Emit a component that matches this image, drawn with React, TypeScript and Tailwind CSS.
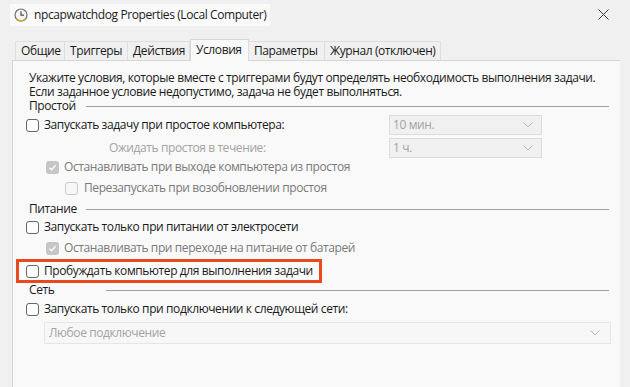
import React from "react";

const font = { fontFamily: '"Open Sans", "Noto Sans", sans-serif' };

function Check({ checked = false, disabled = false }: { checked?: boolean; disabled?: boolean }) {
  if (disabled && checked) {
    return (
      <div className="w-[13px] h-[13px] rounded-[3px] bg-[#c6c6c6] flex items-center justify-center shrink-0">
        <svg width="9" height="9" viewBox="0 0 9 9">
          <path d="M1.5 4.7 L3.6 6.7 L7.6 2.2" stroke="#ffffff" strokeWidth="1.3" fill="none" />
        </svg>
      </div>
    );
  }
  if (disabled) {
    return <div className="w-[13px] h-[13px] rounded-[3px] border border-[#c8c8c8] bg-[#f7f7f7] shrink-0" />;
  }
  return <div className="w-[13px] h-[13px] rounded-[3px] border border-[#666666] bg-[#fdfdfd] shrink-0" />;
}

function Chevron() {
  return (
    <svg width="10" height="6" viewBox="0 0 10 6">
      <path d="M0.5 0.5 L5 5 L9.5 0.5" stroke="#b4b4b4" strokeWidth="1" fill="none" />
    </svg>
  );
}

function Combo({ text, w, h = 20 }: { text: string; w: string; h?: number }) {
  return (
    <div
      className={`${w} border border-[#dcdcdc] bg-[#f0f0f0] flex items-center justify-between pl-[3px] pr-[8px] text-[#a3a3a3]`}
      style={{ height: h }}
    >
      <span className="whitespace-nowrap">{text}</span>
      <Chevron />
    </div>
  );
}

function GroupHeader({ label, lineStart }: { label: string; lineStart: string }) {
  return (
    <div className="flex items-center relative h-full">
      <span className="pl-[16px] whitespace-nowrap">{label}</span>
      <div className={`absolute ${lineStart} right-[11px] top-1/2 h-px bg-[#a0a0a0]`} />
    </div>
  );
}

export default function App() {
  const tabs = [
    { t: "Общие", w: "w-[50px]" },
    { t: "Триггеры", w: "w-[64px]" },
    { t: "Действия", w: "w-[63px]" },
    { t: "Условия", w: "w-[59px]", sel: true },
    { t: "Параметры", w: "w-[77px]" },
    { t: "Журнал (отключен)", w: "w-[117px]" },
  ];
  return (
    <div
      className="w-[630px] h-[387px] bg-[#f0f0f0] text-[12px] tracking-[-0.4px] text-[#1a1a1a] overflow-hidden flex flex-col whitespace-nowrap"
      style={font}
    >
      {/* title bar */}
      <div className="h-[30px] flex items-center relative shrink-0">
        <div className="ml-[10px] h-[22px] bg-[#fafafa] flex items-center pr-[4px]">
          <svg width="14" height="14" viewBox="0 0 14 14" className="ml-[4px]">
            <circle cx="7" cy="7" r="6" fill="#f4f4f4" stroke="#6e6e6e" strokeWidth="1.2" />
            <path d="M7 3.3 V7.2 H10" stroke="#4a4a4a" strokeWidth="1.2" fill="none" />
            <path d="M2.2 10.5 A6 6 0 0 0 11.8 10.5" stroke="#d9a520" strokeWidth="1.2" fill="none" />
          </svg>
          <span className="ml-[6px] text-[12px] text-[#1a1a1a]">npcapwatchdog Properties (Local Computer)</span>
        </div>
        <svg width="11" height="11" viewBox="0 0 11 11" className="absolute left-[598px] top-[9px]">
          <path d="M0.5 0.5 L10.5 10.5 M10.5 0.5 L0.5 10.5" stroke="#3a3a3a" strokeWidth="1" />
        </svg>
      </div>
      {/* tabs */}
      <div className="h-[30px] flex items-end pl-[15px] shrink-0 relative z-10">
        {tabs.map((tb) =>
          tb.sel ? (
            <div
              key={tb.t}
              className={`${tb.w} h-[22px] bg-[#f9f9f9] border border-b-0 border-[#d6d6d6] pl-[5px] pb-[2px] flex items-center -mb-px`}
            >
              {tb.t}
            </div>
          ) : (
            <div
              key={tb.t}
              className={`${tb.w} h-[19px] bg-[#f0f0f0] border-l border-t border-r border-[#dedede] -ml-px first:ml-0 pl-[5px] flex items-center`}
            >
              {tb.t}
            </div>
          )
        )}
      </div>
      {/* panel */}
      <div className="ml-[12px] w-[608px] flex-1 bg-[#f9f9f9] border-l border-t border-[#d6d6d6] flex flex-col pt-[10px]">
        <div className="h-[14px] flex items-center pl-[16px] leading-[14px]">
          Укажите условия, которые вместе с триггерами будут определять необходимость выполнения задачи.
        </div>
        <div className="h-[14px] flex items-center pl-[16px] leading-[14px]">
          Если заданное условие недопустимо, задача не будет выполняться.
        </div>
        <div className="h-[14px]">
          <GroupHeader label="Простой" lineStart="left-[73px]" />
        </div>
        <div className="h-[24px] flex items-center">
          <div className="pl-[13px] flex items-center gap-[5px] w-[376px]">
            <Check />
            <span>Запускать задачу при простое компьютера:</span>
          </div>
          <Combo text="10 мин." w="w-[153px]" />
        </div>
        <div className="h-[22px] flex items-center">
          <div className="pl-[96px] w-[376px] text-[#a3a3a3]">Ожидать простоя в течение:</div>
          <Combo text="1 ч." w="w-[153px]" />
        </div>
        <div className="h-[16px] flex items-center pl-[33px] gap-[5px] text-[#7a7a7a]">
          <Check checked disabled />
          <span>Останавливать при выходе компьютера из простоя</span>
        </div>
        <div className="h-[26px] flex items-center pl-[52px] gap-[6px] text-[#7a7a7a]">
          <Check disabled />
          <span>Перезапускать при возобновлении простоя</span>
        </div>
        <div className="h-[16px]">
          <GroupHeader label="Питание" lineStart="left-[73px]" />
        </div>
        <div className="h-[20px] flex items-center pl-[13px] gap-[5px]">
          <Check />
          <span>Запускать только при питании от электросети</span>
        </div>
        <div className="h-[22px] flex items-center pl-[33px] gap-[5px] text-[#7a7a7a]">
          <Check checked disabled />
          <span>Останавливать при переходе на питание от батарей</span>
        </div>
        <div className="h-[24px] ml-[3px] w-[306px] border-[3px] border-[#e8491f] flex items-center pl-[7px] gap-[5px] bg-[#fbfbfb]">
          <Check />
          <span>Пробуждать компьютер для выполнения задачи</span>
        </div>
        <div className="h-[14px]">
          <GroupHeader label="Сеть" lineStart="left-[93px]" />
        </div>
        <div className="h-[24px] flex items-center pl-[13px] gap-[5px]">
          <Check />
          <span>Запускать только при подключении к следующей сети:</span>
        </div>
        <div className="pl-[31px] mt-[1px]">
          <div className="w-[567px] h-[22px] border border-[#e6e6e6] bg-[#f7f7f7] flex items-center justify-between pl-[4px] pr-[10px] text-[#a3a3a3]">
            <span>Любое подключение</span>
            <Chevron />
          </div>
        </div>
      </div>
    </div>
  );
}
